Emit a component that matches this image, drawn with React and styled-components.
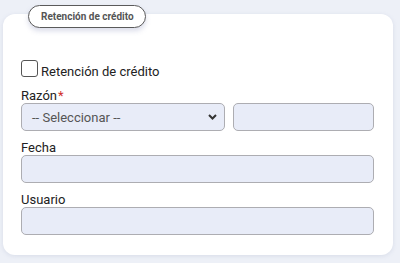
import React from "react";
import styled, { createGlobalStyle } from "styled-components";

const Global = createGlobalStyle`
  html, body { margin: 0; padding: 0; background: #edf0f7; }
  body { font-family: Roboto, "Liberation Sans", sans-serif; }
  * { box-sizing: border-box; }
`;

const Page = styled.div`
  padding: 14px 7px 8px 3px;
`;

const Card = styled.section`
  position: relative;
  background: #fff;
  border-radius: 12px;
  box-shadow: 0 1px 4px rgba(120, 135, 170, 0.18);
  padding: 47px 19px 20px 18px;
  height: 241px;
`;

const Legend = styled.div`
  position: absolute;
  top: -9px;
  left: 25px;
  height: 23px;
  padding: 0 11px 0 12px;
  display: flex;
  align-items: center;
  background: #fff;
  border: 1.5px solid #5a5a5a;
  border-radius: 12px;
  box-shadow: 0 3px 5px rgba(110, 120, 170, 0.25);
  font-size: 10px;
  font-weight: 700;
  color: #555;
`;

const CheckRow = styled.label`
  display: flex;
  align-items: center;
  gap: 3px;
  height: 20px;
  font-size: 13px;
  color: #222;
  margin-bottom: 7px;
`;

const Box = styled.span`
  width: 17px;
  height: 17px;
  border: 1.5px solid #555;
  border-radius: 3px;
  background: #fff;
  margin-top: -6px;
`;

const Field = styled.div`
  display: flex;
  flex-direction: column;
  margin-bottom: ${(p) => p.$mb ?? 9}px;
`;

const Label = styled.div`
  font-size: 13px;
  line-height: 15px;
  height: 15px;
  color: #222;
`;

const Star = styled.span`
  color: #d0302a;
  margin-left: 1px;
`;

const Row = styled.div`
  display: flex;
  gap: 8px;
`;

const SelectWrap = styled.div`
  position: relative;
  width: 204px;
`;

const Select = styled.div`
  height: 28px;
  border: 1px solid #adadb2;
  border-radius: 5px;
  background: #e8ecf8;
  font-size: 13px;
  color: #555;
  display: flex;
  align-items: center;
  padding-left: 10px;
`;

const Chevron = styled.svg`
  position: absolute;
  right: 8px;
  top: 11px;
`;

const Input = styled.div`
  height: 28px;
  flex: ${(p) => (p.$grow ? 1 : "none")};
  width: ${(p) => (p.$w ? `${p.$w}px` : "auto")};
  border: 1px solid #adadb2;
  border-radius: 5px;
  background: #e8ecf8;
`;

export default function App() {
  return (
    <>
      <Global />
      <Page>
        <Card>
          <Legend>Retención de crédito</Legend>
          <CheckRow>
            <Box />
            <span>Retención de crédito</span>
          </CheckRow>
          <Field>
            <Label>
              Razón<Star>*</Star>
            </Label>
            <Row>
              <SelectWrap>
                <Select>-- Seleccionar --</Select>
                <Chevron width="9" height="6" viewBox="0 0 9 6">
                  <path d="M1 1l3.5 3.5L8 1" fill="none" stroke="#333" strokeWidth="2" />
                </Chevron>
              </SelectWrap>
              <Input $w={141} />
            </Row>
          </Field>
          <Field>
            <Label>Fecha</Label>
            <Input />
          </Field>
          <Field $mb={0}>
            <Label>Usuario</Label>
            <Input />
          </Field>
        </Card>
      </Page>
    </>
  );
}
